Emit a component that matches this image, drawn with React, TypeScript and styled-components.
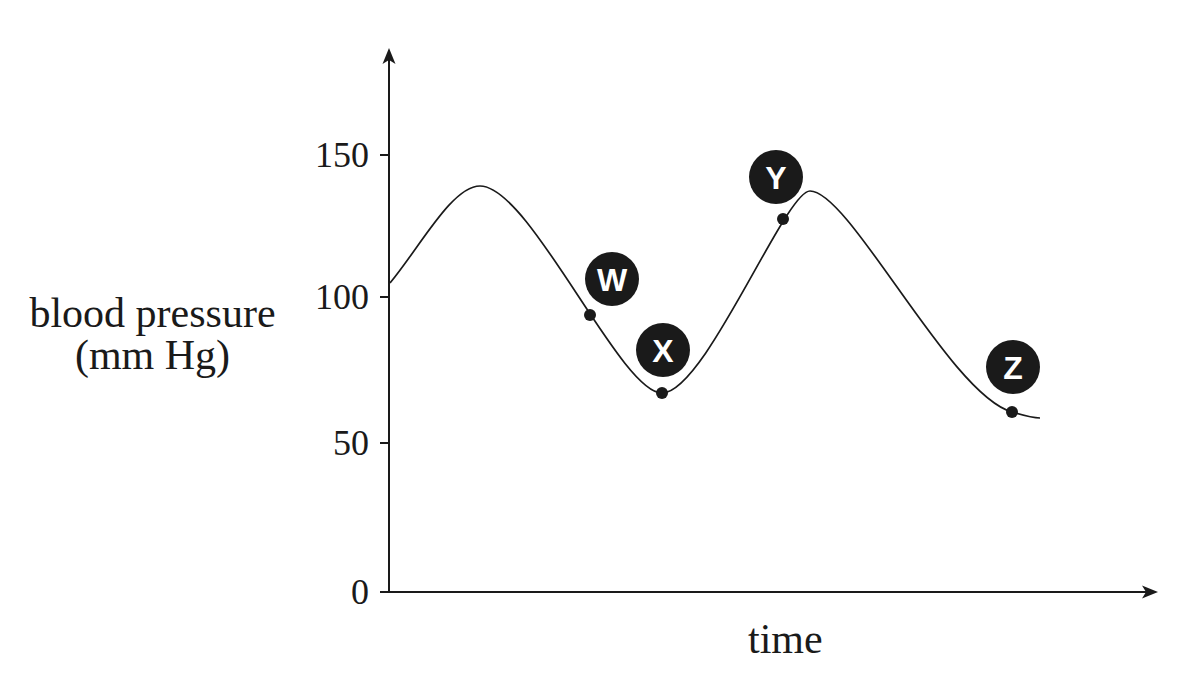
import styled, { createGlobalStyle } from 'styled-components';

const GlobalStyle = createGlobalStyle`
    html, body {
        margin: 0;
        padding: 0;
        background: #ffffff;
    }

    body {
        font-family: "Liberation Serif", "Times New Roman", serif;
        color: #1a1a1a;
    }
`;

const ink = '#1a1a1a';

const Page = styled.div`
    display: grid;
    grid-template-columns: 305px 895px;
    grid-template-rows: 618px 56px;
    width: 1200px;
    height: 674px;
    overflow: hidden;
`;

const YLabel = styled.div`
    padding-top: 292px;
    font-size: 42px;
    line-height: 42px;
    text-align: center;
    color: ${ink};
`;

const XLabel = styled.div`
    grid-column: 2;
    padding-left: 443px;
    font-size: 42px;
    line-height: 42px;
    color: ${ink};
`;

const Chart = styled.svg`
    display: block;
    width: 895px;
    height: 618px;
`;

const Axis = styled.path`
    fill: none;
    stroke: ${ink};
    stroke-width: 2;
`;

const Arrow = styled.path`
    fill: ${ink};
    stroke: none;
`;

const Curve = styled.path`
    fill: none;
    stroke: ${ink};
    stroke-width: 1.7;
`;

const TickLabel = styled.text`
    font-family: "Liberation Serif", "Times New Roman", serif;
    font-size: 36px;
    fill: ${ink};
    text-anchor: end;
`;

const Dot = styled.circle`
    fill: ${ink};
`;

const Disc = styled.circle`
    fill: ${ink};
`;

const Letter = styled.text`
    font-family: "Liberation Sans", Arial, sans-serif;
    font-weight: 700;
    font-size: 32px;
    fill: #ffffff;
    text-anchor: middle;
`;

const ticks = [
    { label: '150', y: 155 },
    { label: '100', y: 297 },
    { label: '50', y: 443 },
    { label: '0', y: 592 },
];

const markers = [
    { id: 'W', cx: 612, cy: 279, dx: 590, dy: 315 },
    { id: 'X', cx: 663, cy: 350, dx: 662, dy: 393 },
    { id: 'Y', cx: 776, cy: 177, dx: 783, dy: 219 },
    { id: 'Z', cx: 1013, cy: 367, dx: 1012, dy: 412 },
];

const wave =
    'M390,283 C420,247 452,186 480,186 ' +
    'C530,186 620,393 662,393 ' +
    'C705,393 785,191 810,191 ' +
    'C850,191 950,395 1012,412 ' +
    'C1025,416 1032,418 1040,418';

function App() {
    return (
        <Page>
            <GlobalStyle />
            <YLabel>
                blood pressure
                <br />
                (mm Hg)
            </YLabel>
            <Chart viewBox="305 0 895 618">
                <Axis d="M389,58 L389,592 L1150,592" />
                {ticks.map(t => (
                    <g key={t.label}>
                        <Axis d={`M380,${t.y} L389,${t.y}`} />
                        <TickLabel x={369} y={t.y + 12}>{t.label}</TickLabel>
                    </g>
                ))}
                <Arrow d="M389,48 L395.5,64 L389,60 L382.5,64 Z" />
                <Arrow d="M1158,592 L1142,598.5 L1146,592 L1142,585.5 Z" />
                <Curve d={wave} />
                {markers.map(m => (
                    <g key={m.id}>
                        <Dot cx={m.dx} cy={m.dy} r={6} />
                        <Disc cx={m.cx} cy={m.cy} r={27} />
                        <Letter x={m.cx} y={m.cy + 11.5}>{m.id}</Letter>
                    </g>
                ))}
            </Chart>
            <XLabel>time</XLabel>
        </Page>
    );
}

export default App;
